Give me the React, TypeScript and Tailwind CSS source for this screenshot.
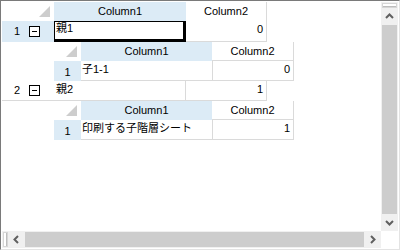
const font = { fontFamily: '"Liberation Sans", "Noto Sans CJK JP", sans-serif' };

const Corner = ({ w }: { w: number }) => (
  <div className="relative h-full bg-white" style={{ width: w }}>
    <svg className="absolute bottom-[4px] right-[4px]" width="11" height="11" viewBox="0 0 11 11">
      <polygon points="11,0 11,11 0,11" fill="#cdcdcd" />
    </svg>
  </div>
);

const ExpandBox = () => (
  <div className="flex h-[11px] w-[11px] items-center justify-center border border-black bg-white">
    <div className="h-px w-[5px] bg-black" />
  </div>
);

const Chevron = ({ dir }: { dir: "up" | "down" | "left" | "right" }) => {
  const d = {
    up: "M1 5 L4.5 1.5 L8 5",
    down: "M1 2 L4.5 5.5 L8 2",
    left: "M5 1 L1.5 4.5 L5 8",
    right: "M2 1 L5.5 4.5 L2 8",
  }[dir];
  const vert = dir === "up" || dir === "down";
  return (
    <svg width={vert ? 9 : 7} height={vert ? 7 : 9} viewBox={vert ? "0 0 9 7" : "0 0 7 9"}>
      <path d={d} fill="none" stroke="#606060" strokeWidth="2" />
    </svg>
  );
};

const ParentRow = ({ n, label, value, current, selected }: { n: number; label: string; value: string; current?: boolean; selected?: boolean }) => (
  <div className="flex" style={{ height: current ? 21 : 20 }}>
    <div className={`flex w-[52px] items-center ${selected ? "bg-[#dcebf6]" : "border-b border-[#dadada] bg-white"}`}>
      <span className="w-[18px] text-right">{n}</span>
      <div className="ml-[9px]">
        <ExpandBox />
      </div>
    </div>
    {current ? (
      <div className="w-[132px] border-t border-l border-r-[3px] border-b-[3px] border-black pl-px leading-[12px]">{label}</div>
    ) : (
      <div className="w-[132px] border-r border-b border-[#dadada] pl-[2px] pt-[2px] leading-[12px]">{label}</div>
    )}
    <div className="w-[81px] border-r border-b border-[#dadada] pr-[3px] pt-[2px] text-right leading-[12px]">{value}</div>
  </div>
);

const ChildGrid = ({ label, value }: { label: string; value: string }) => (
  <div className="ml-[52px]">
    <div className="flex h-[19px]">
      <Corner w={27} />
      <div className="flex w-[131px] items-center justify-center bg-[#dcebf6]">Column1</div>
      <div className="flex w-[82px] items-center justify-center border-r border-b border-[#dadada] bg-white">Column2</div>
    </div>
    <div className="flex h-[20px]">
      <div className="flex w-[27px] items-center justify-center bg-[#dcebf6] pt-[3px]">1</div>
      <div className="w-[131px] border-b border-[#dadada] pl-px pt-[2px] leading-[12px]">{label}</div>
      <div className="w-[82px] border-l border-r border-b border-[#dadada] pr-[3px] pt-[2px] text-right leading-[12px]">{value}</div>
    </div>
  </div>
);

export default function App() {
  return (
    <div className="h-[250px] w-[400px] border-t border-l border-r border-b border-t-[#7a7a7a] border-l-[#7a7a7a] border-r-[#e3e3e3] border-b-[#e3e3e3] bg-white" style={font}>
      <div className="flex h-full w-full flex-col border border-white text-[11px] text-black">
        <div className="flex min-h-0 flex-1">
          <div className="flex-1 overflow-hidden bg-white">
            <div className="flex h-[19px]">
              <Corner w={52} />
              <div className="flex w-[132px] items-center justify-center bg-[#dcebf6]">Column1</div>
              <div className="flex w-[81px] items-center justify-center border-r border-[#dadada] bg-white">Column2</div>
            </div>
            <ParentRow n={1} label="親1" value="0" current selected />
            <ChildGrid label="子1-1" value="0" />
            <ParentRow n={2} label="親2" value="1" />
            <ChildGrid label="印刷する子階層シート" value="1" />
          </div>
          <div className="flex w-[17px] flex-col bg-[#f0f0f0]">
            <div className="mx-px mt-px flex h-[5px] flex-col justify-end border border-[#d6d6d6] bg-white">
              <div className="h-px bg-[#bdbdbd]" />
            </div>
            <div className="flex h-[17px] items-center justify-center">
              <Chevron dir="up" />
            </div>
            <div className="mx-px flex-1 bg-[#cdcdcd]" />
            <div className="flex h-[17px] items-center justify-center">
              <Chevron dir="down" />
            </div>
          </div>
        </div>
        <div className="flex h-[17px]">
          <div className="flex flex-1 bg-[#f0f0f0]">
            <div className="my-px ml-px flex w-[5px] justify-end border border-[#d6d6d6] bg-white">
              <div className="w-px bg-[#bdbdbd]" />
            </div>
            <div className="flex w-[17px] items-center justify-center">
              <Chevron dir="left" />
            </div>
            <div className="my-px flex-1 bg-[#cdcdcd]" />
            <div className="flex w-[17px] items-center justify-center">
              <Chevron dir="right" />
            </div>
          </div>
          <div className="w-[17px] bg-white" />
        </div>
      </div>
    </div>
  );
}
